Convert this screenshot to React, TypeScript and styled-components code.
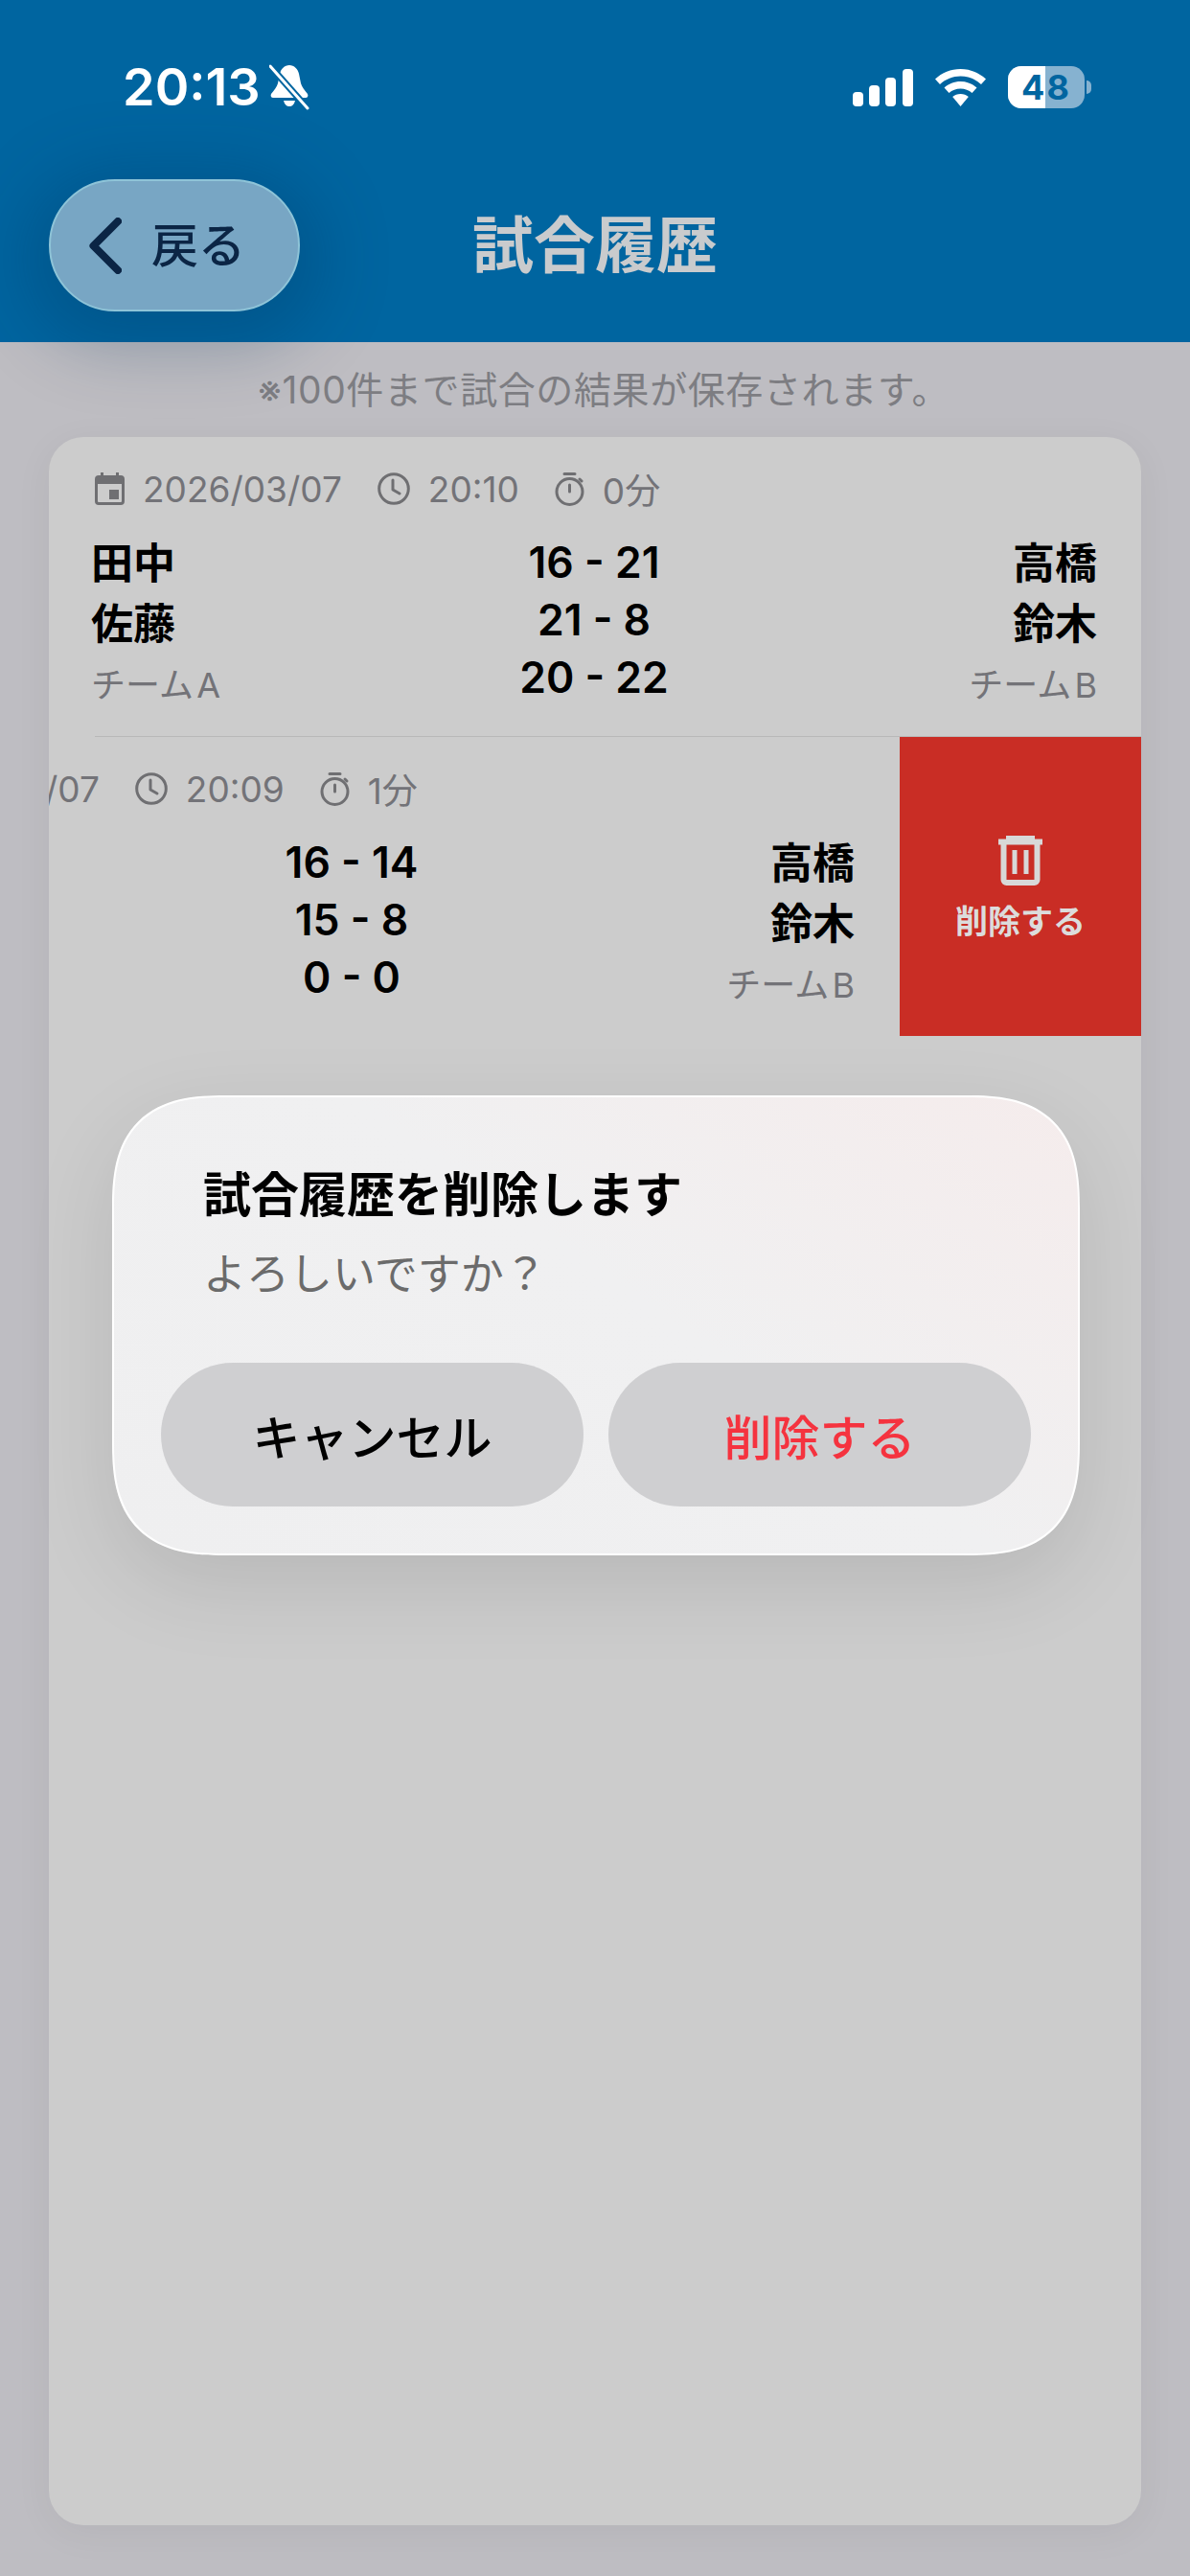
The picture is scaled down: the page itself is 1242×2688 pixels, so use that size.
import React from 'react';
import styled, { createGlobalStyle } from 'styled-components';

const FONT = `Inter, "Noto Sans CJK JP", sans-serif`;

const GlobalStyle = createGlobalStyle`
  html, body {
    margin: 0;
    padding: 0;
    background: #bebdc2;
  }
  * {
    box-sizing: border-box;
  }
`;

const Page = styled.div`
  position: relative;
  display: flex;
  flex-direction: column;
  width: 1242px;
  height: 2688px;
  overflow: hidden;
  background: #bebdc2;
  font-family: ${FONT};
`;

const Header = styled.header`
  position: relative;
  z-index: 1;
  height: 357px;
  padding-top: 64px;
  background: #0065a0;
`;

const StatusBar = styled.div`
  display: flex;
  align-items: center;
  justify-content: space-between;
  height: 54px;
  padding: 0 110px 0 128px;
  color: #fff;
`;

const StatusLeft = styled.div`
  display: flex;
  align-items: center;
  gap: 9px;
`;

const Time = styled.span`
  font-size: 54px;
  font-weight: 600;
  line-height: 54px;
`;

const StatusRight = styled.div`
  display: flex;
  align-items: center;
  gap: 23px;
`;

const Battery = styled.div`
  position: relative;
  width: 80px;
  height: 44px;
  border-radius: 14px;
  overflow: hidden;
  background: #86b2d0;
  text-align: center;
  color: #0065a0;
  font-size: 36px;
  font-weight: 700;
  line-height: 44px;
  letter-spacing: 2px;

  &::before {
    content: '';
    position: absolute;
    left: 0;
    top: 0;
    bottom: 0;
    width: 39px;
    background: #fff;
  }
  span {
    position: relative;
  }
`;

const BatteryWrap = styled.div`
  position: relative;
  &::after {
    content: '';
    position: absolute;
    right: -7px;
    top: 15px;
    width: 5px;
    height: 14px;
    border-radius: 0 7px 7px 0;
    background: #86b2d0;
  }
`;

const NavBar = styled.div`
  display: grid;
  grid-template-columns: 1fr auto 1fr;
  align-items: center;
  height: 136px;
  margin-top: 69px;
  padding: 0 51px;
`;

const BackButton = styled.button`
  display: flex;
  align-items: center;
  gap: 31px;
  width: 262px;
  height: 138px;
  padding: 0 0 0 40px;
  border: 2px solid #8ec4d8;
  border-radius: 69px;
  background: #78a6c4;
  box-shadow: 0 14px 70px 24px rgba(0, 45, 85, 0.26);
  color: #0b2545;
  font-family: ${FONT};
  font-size: 49px;
  font-weight: 500;
  line-height: 1;
`;

const Title = styled.h1`
  margin: 0;
  color: #c9cbcd;
  font-size: 64px;
  font-weight: 700;
  line-height: 1;
`;

const Note = styled.p`
  height: 50px;
  margin: 25px 0 0;
  padding-left: 18px;
  color: #7d7d82;
  font-size: 39px;
  line-height: 50px;
  letter-spacing: 0.6px;
  text-align: center;
`;

const Card = styled.section`
  width: 1140px;
  height: 2179px;
  margin: 24px 0 0 51px;
  border-radius: 36px;
  overflow: hidden;
  background: #cccccc;
  box-shadow: 0 8px 40px rgba(0, 0, 0, 0.05);
`;

const Row = styled.div`
  position: relative;
  height: 312px;
`;

const RowBody = styled.div<{ $offset?: number }>`
  padding: 32px 46px 0 44px;
  transform: translateX(${p => p.$offset ?? 0}px);
`;

const Meta = styled.div`
  display: flex;
  align-items: center;
  gap: 37px;
  height: 44px;
  margin-left: 4px;
  color: #737378;
  font-size: 37px;
  white-space: nowrap;
`;

const MetaItem = styled.span`
  display: flex;
  align-items: center;
  gap: 19px;
`;

const Match = styled.div`
  display: grid;
  grid-template-columns: 1fr auto 1fr;
  margin-top: 25px;
`;

const Side = styled.div<{ $right?: boolean }>`
  display: flex;
  flex-direction: column;
  align-items: ${p => (p.$right ? 'flex-end' : 'flex-start')};
`;

const Name = styled.span`
  color: #000;
  font-size: 44px;
  font-weight: 700;
  line-height: 63px;
`;

const Team = styled.span`
  margin-top: 1px;
  color: #737378;
  font-size: 36px;
  line-height: 63px;
`;

const Scores = styled.div`
  display: flex;
  flex-direction: column;
  align-items: center;
`;

const Score = styled.span`
  color: #000;
  font-size: 44.5px;
  font-weight: 600;
  line-height: 60px;
`;

const Divider = styled.div`
  height: 1px;
  margin-left: 48px;
  background: #b8b8b8;
`;

const DeleteAction = styled.button`
  position: absolute;
  top: 0;
  right: 0;
  bottom: 0;
  display: flex;
  flex-direction: column;
  align-items: center;
  justify-content: center;
  gap: 11px;
  width: 252px;
  padding: 6px 0 0;
  border: 0;
  background: #c92d25;
  color: #dcdcdc;
  font-family: ${FONT};
  font-size: 34px;
  font-weight: 700;
`;

const Dialog = styled.div`
  position: absolute;
  z-index: 2;
  left: 117px;
  top: 1143px;
  width: 1010px;
  height: 480px;
  padding: 67px 49px 0;
  border: 2px solid #fff;
  border-radius: 118px;
  corner-shape: superellipse(1.4);
  background: linear-gradient(215deg, #f5ecec 0%, #f0f0f1 45%, #efeff0 100%);
  box-shadow: 0 30px 90px rgba(0, 0, 0, 0.1);
`;

const DialogTitle = styled.h2`
  margin: 0 0 0 44px;
  color: #000;
  font-size: 50px;
  font-weight: 700;
  line-height: 70px;
`;

const DialogText = styled.p`
  margin: 17px 0 0 44px;
  color: #6b6b6b;
  font-size: 45px;
  line-height: 62px;
`;

const DialogButtons = styled.div`
  display: flex;
  gap: 26px;
  margin-top: 61px;
`;

const DialogButton = styled.button<{ $danger?: boolean }>`
  flex: 1;
  height: 150px;
  border: 0;
  border-radius: 75px;
  background: #cfcfd1;
  color: ${p => (p.$danger ? '#f5333f' : '#000')};
  font-family: ${FONT};
  font-size: 50px;
  font-weight: 500;
`;

const Icon = styled.svg`
  display: block;
  flex: none;
`;

const CalendarIcon = () => (
  <Icon width="31" height="34" viewBox="0 0 31 34" fill="#6f6f72">
    <path d="M6 0h3v3h13V0h3v3h2a4 4 0 0 1 4 4v23a4 4 0 0 1-4 4H4a4 4 0 0 1-4-4V7a4 4 0 0 1 4-4h2V0zM3 12v18a1 1 0 0 0 1 1h23a1 1 0 0 0 1-1V12H3z" />
    <rect x="15" y="18" width="10" height="10" />
  </Icon>
);

const ClockIcon = () => (
  <Icon width="34" height="34" viewBox="0 0 34 34" fill="none" stroke="#6f6f72" strokeWidth="3" strokeLinecap="round" strokeLinejoin="round">
    <circle cx="17" cy="17" r="15.300" />
    <path d="M16 8v10l7 4" />
  </Icon>
);

const TimerIcon = () => (
  <Icon width="31" height="35" viewBox="0 0 31 35" fill="none" stroke="#6f6f72" strokeWidth="3" strokeLinecap="round">
    <circle cx="15.500" cy="20" r="13.500" />
    <path d="M10 1.500h11M15.500 13v7M26 7l2 2" />
  </Icon>
);

const TrashIcon = () => (
  <Icon width="46" height="52" viewBox="0 0 46 52" fill="none" stroke="#d8d8d8" strokeWidth="6">
    <path d="M0 6.500h46M11 6.500V3h24v3.500M5.500 6.500V46a3 3 0 0 0 3 3h29a3 3 0 0 0 3-3V6.500" />
    <path d="M17 15v25M29 15v25" strokeWidth="5" />
  </Icon>
);

const ChevronIcon = () => (
  <Icon width="34" height="59" viewBox="0 0 34 59" fill="none" stroke="#0b2545" strokeWidth="8" strokeLinecap="round" strokeLinejoin="round">
    <path d="M30 4 4.500 29.500 30 55" />
  </Icon>
);

const BellOffIcon = () => (
  <Icon width="42" height="48" viewBox="0 0 42 48" fill="#fff">
    <path d="M21 1c5 0 9 4 10 9l2 10c1 4 4 7 7 11 1 2 0 4-2 4H4c-2 0-3-2-2-4 3-4 6-7 7-11l2-10C12 5 16 1 21 1zM15 38h12c-1 4-3 6-6 6s-5-2-6-6z" />
    <path d="M1 2l39 44" stroke="#0065a0" strokeWidth="7" />
    <path d="M1 2l39 44" stroke="#fff" strokeWidth="3" strokeLinecap="round" />
  </Icon>
);

const SignalIcon = () => (
  <Icon width="63" height="39" viewBox="0 0 63 39" fill="#fff">
    <rect x="0" y="24" width="11" height="15" rx="4" />
    <rect x="17" y="17" width="11" height="22" rx="4" />
    <rect x="34" y="9" width="11" height="30" rx="4" />
    <rect x="52" y="0" width="11" height="39" rx="4" />
  </Icon>
);

const WifiIcon = () => (
  <Icon width="53" height="39" viewBox="0 0 53 39" fill="#fff">
    <path d="M26.5 0c10 0 19.500 4 26.500 10.500l-5 5.500C42 10.500 34.500 7.500 26.500 7.500S11 10.500 5 16L0 10.500C7 4 16.500 0 26.500 0z" />
    <path d="M26.500 13c6.500 0 12.500 2.500 17 6.500l-5 5.500c-3.200-2.800-7.500-4.500-12-4.500s-8.800 1.700-12 4.500l-5-5.500c4.500-4 10.500-6.500 17-6.500z" />
    <path d="M26.500 26c3.200 0 6 1.100 8.300 3L26.500 39l-8.300-10c2.300-1.900 5.100-3 8.300-3z" />
  </Icon>
);

type MatchData = {
  date: string;
  time: string;
  duration: string;
  left: string[];
  right: string[];
  scores: string[];
};

// second row is swiped open, so its left team is off the card
const matches: MatchData[] = [
  {
    date: '2026/03/07',
    time: '20:10',
    duration: '0分',
    left: ['田中', '佐藤'],
    right: ['高橋', '鈴木'],
    scores: ['16 - 21', '21 - 8', '20 - 22'],
  },
  {
    date: '2026/03/07',
    time: '20:09',
    duration: '1分',
    left: [],
    right: ['高橋', '鈴木'],
    scores: ['16 - 14', '15 - 8', '0 - 0'],
  },
];

const MatchBody = ({ match, offset }: { match: MatchData; offset?: number }) => (
  <RowBody $offset={offset}>
    <Meta>
      <MetaItem>
        <CalendarIcon />
        {match.date}
      </MetaItem>
      <MetaItem>
        <ClockIcon />
        {match.time}
      </MetaItem>
      <MetaItem>
        <TimerIcon />
        {match.duration}
      </MetaItem>
    </Meta>
    <Match>
      <Side>
        {match.left.map(name => (
          <Name key={name}>{name}</Name>
        ))}
        {match.left.length > 0 && <Team>チーム{'\u200A'}A</Team>}
      </Side>
      <Scores>
        {match.scores.map((score, index) => (
          <Score key={index}>{score}</Score>
        ))}
      </Scores>
      <Side $right>
        {match.right.map(name => (
          <Name key={name}>{name}</Name>
        ))}
        <Team>チーム{'\u200A'}B</Team>
      </Side>
    </Match>
  </RowBody>
);

const App = () => (
  <Page>
    <GlobalStyle />
    <Header>
      <StatusBar>
        <StatusLeft>
          <Time>20:13</Time>
          <BellOffIcon />
        </StatusLeft>
        <StatusRight>
          <SignalIcon />
          <WifiIcon />
          <BatteryWrap>
            <Battery>
              <span>48</span>
            </Battery>
          </BatteryWrap>
        </StatusRight>
      </StatusBar>
      <NavBar>
        <BackButton>
          <ChevronIcon />
          戻る
        </BackButton>
        <Title>試合履歴</Title>
      </NavBar>
    </Header>
    <Note>※100件まで試合の結果が保存されます。</Note>
    <Card>
      <Row>
        <MatchBody match={matches[0]} />
      </Row>
      <Divider />
      <Row>
        <MatchBody match={matches[1]} offset={-253} />
        <DeleteAction>
          <TrashIcon />
          削除する
        </DeleteAction>
      </Row>
    </Card>
    <Dialog>
      <DialogTitle>試合履歴を削除します</DialogTitle>
      <DialogText>よろしいですか？</DialogText>
      <DialogButtons>
        <DialogButton>キャンセル</DialogButton>
        <DialogButton $danger>削除する</DialogButton>
      </DialogButtons>
    </Dialog>
  </Page>
);

export default App;
